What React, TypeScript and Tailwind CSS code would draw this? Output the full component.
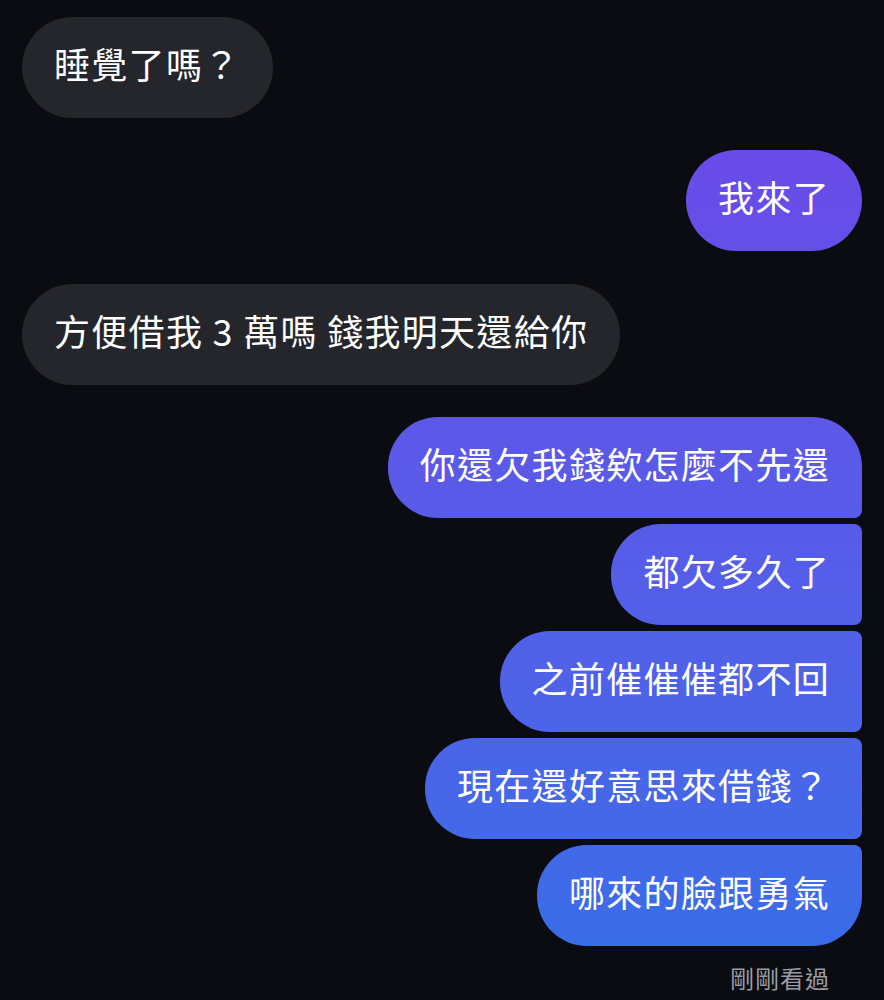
import React from 'react';

type Msg = { text: string; mine: boolean };

const received = 'bg-[#24262b]';

function Bubble({ text, className }: { text: string; className: string }) {
  return (
    <div
      className={`h-[101px] flex items-center px-[32px] pb-[9px] text-white text-[36px] tracking-[1.3px] whitespace-nowrap ${className}`}
    >
      {text}
    </div>
  );
}

// sent bubbles share one gradient pinned to the viewport, like the app does
const sent = 'bg-fixed bg-linear-to-b from-[#6f43e8] to-[#346ee8]';

export default function App() {
  const group: Msg[] = [
    { text: '你還欠我錢欸怎麼不先還', mine: true },
    { text: '都欠多久了', mine: true },
    { text: '之前催催催都不回', mine: true },
    { text: '現在還好意思來借錢？', mine: true },
    { text: '哪來的臉跟勇氣', mine: true },
  ];

  const cornerFor = (i: number) => {
    if (i === 0) return 'rounded-l-[50px] rounded-tr-[50px] rounded-br-[8px]';
    if (i === group.length - 1) return 'rounded-l-[50px] rounded-tr-[8px] rounded-br-[50px]';
    return 'rounded-l-[50px] rounded-r-[8px]';
  };

  return (
    <div
      className="min-h-[1000px] bg-[#0b0c11] px-[22px] pt-[17px] flex flex-col"
      style={{ fontFamily: '"Noto Sans CJK TC", "Noto Sans", sans-serif' }}
    >
      <div className="self-start">
        <Bubble text="睡覺了嗎？" className={`${received} rounded-full`} />
      </div>

      <div className="self-end mt-[32px]">
        <Bubble text="我來了" className={`${sent} rounded-full`} />
      </div>

      <div className="self-start mt-[33px]">
        <Bubble text="方便借我 3 萬嗎 錢我明天還給你" className={`${received} rounded-full`} />
      </div>

      <div className="flex flex-col items-end gap-[6px] mt-[32px]">
        {group.map((m, i) => (
          <Bubble key={i} text={m.text} className={`${sent} ${cornerFor(i)}`} />
        ))}
      </div>

      <div className="self-end mt-[14px] mr-[32px] text-[24px] text-[#9a9ca3] tracking-[1px]">
        剛剛看過
      </div>
    </div>
  );
}
